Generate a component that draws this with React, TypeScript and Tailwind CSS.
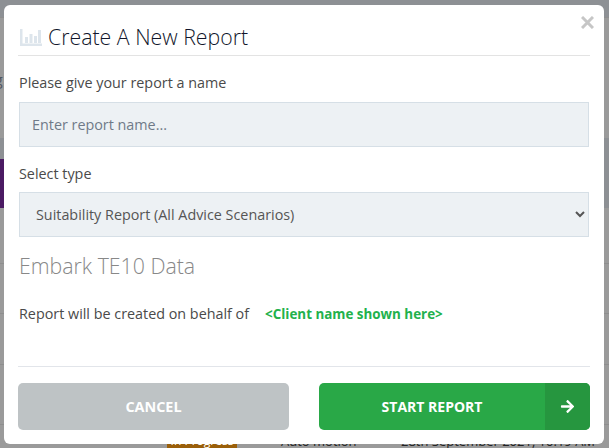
import React from "react";
import { FaArrowRight } from "react-icons/fa";

function ChartIcon() {
  return (
    <svg width="22" height="17" viewBox="0 0 22 17" className="shrink-0" fill="#dde5ec">
      <path d="M0 0h2.5v14.5H22V17H0z" />
      <rect x="5" y="8" width="3" height="6" />
      <rect x="9.5" y="5" width="3" height="9" />
      <rect x="14" y="7" width="3" height="7" />
      <rect x="18" y="1" width="3" height="13" />
    </svg>
  );
}

function BgRow({ h, className = "", children }: { h: string; className?: string; children?: React.ReactNode }) {
  return <div className={`${h} border-b border-[#8e8e8e] ${className}`}>{children}</div>;
}

export default function App() {
  return (
    <div className="relative h-[448px] w-[609px] overflow-hidden bg-[#9a9a9a] font-['Open_Sans',sans-serif]">
      {/* page behind the dialog */}
      <div className="flex h-[448px] flex-col">
        <div className="h-[17px] shrink-0 bg-[#8d9094]" />
        <div className="flex h-[121px] shrink-0 items-center border-t border-[#8e8e8e] pt-[2px]">
          <span className="ml-[-5px] text-[14px] text-[#4f5560]">g</span>
        </div>
        <div className="flex h-[70px] shrink-0 flex-col bg-[#8d9094]">
          <div className="h-[21px]" />
          <div className="h-[49px] w-[12px] bg-[#4b1a63]" />
        </div>
        <BgRow h="h-[56px] shrink-0" />
        <BgRow h="h-[50px] shrink-0" />
        <BgRow h="h-[51px] shrink-0" />
        <BgRow h="h-[60px] shrink-0" />
        <div className="flex h-[23px] shrink-0 items-end">
          <div className="mb-[-4px] flex h-[22px] w-full shrink-0 text-[13px] leading-[22px] text-[#222]">
            <span className="ml-[167px] w-[70px] bg-[#9a5f0a] text-center text-[12px] text-white">In Progress</span>
            <span className="ml-[44px] w-[120px]">Auto motion</span>
            <span className="whitespace-nowrap">28th September 2021, 10:19 AM</span>
          </div>
        </div>
      </div>

      {/* dialog */}
      <div className="absolute left-[4px] top-[5px] flex h-[439px] w-[600px] flex-col rounded-[6px] bg-white px-[14px]">
        <button className="absolute right-[10px] top-[11px] text-[#c6c6c6]" aria-label="Close">
          <svg width="13" height="13" viewBox="0 0 13 13" stroke="currentColor" strokeWidth="3">
            <path d="M1 1l11 11M12 1L1 12" />
          </svg>
        </button>

        <div className="flex h-[51px] shrink-0 items-end border-b border-[#e3e3e3] pb-[2px] pl-[2px]">
          <div className="flex items-center gap-[6px]">
            <ChartIcon />
            <h1 className="text-[21.3px] font-light leading-[32px] text-[#11162b]">Create A New Report</h1>
          </div>
        </div>

        <label className="mt-[17px] block pl-[1px] text-[14.35px] leading-[20px] text-[#4a4a4a]">
          Please give your report a name
        </label>
        <input
          placeholder="Enter report name..."
          className="ml-[1px] mt-[9px] h-[45px] w-[570px] shrink-0 border border-[#d6dfe6] bg-[#edf1f4] px-[12px] text-[14.35px] text-[#555] outline-none placeholder:text-[#6f7a88]"
        />

        <label className="mt-[17px] block pl-[1px] text-[14.35px] leading-[20px] text-[#4a4a4a]">Select type</label>
        <select
          defaultValue="a"
          className="ml-[1px] mt-[8px] h-[45px] w-[570px] shrink-0 border border-[#d6dfe6] bg-[#edf1f4] px-[12px] text-[14.35px] text-[#555] outline-none"
        >
          <option value="a">Suitability Report (All Advice Scenarios)</option>
        </select>

        <h2 className="mt-[15px] pl-[1px] text-[21.3px] font-light leading-[28px] text-[#888]">Embark TE10 Data</h2>

        <div className="mt-[24px] flex items-center pl-[1px] text-[14.35px] leading-[20px] text-[#4a4a4a]">
          <span>Report will be created on behalf of</span>
          <span className="ml-[16px] text-[13.4px] font-bold text-[#22b14c]">&lt;Client name shown here&gt;</span>
        </div>

        <div className="mt-[42px] h-px shrink-0 bg-[#e2e5ea]" />

        <div className="mt-[16px] flex justify-between">
          <button className="h-[47px] w-[271px] rounded-[5px] bg-[#bec3c5] text-[14.4px] font-bold text-white">
            CANCEL
          </button>
          <button className="flex h-[47px] w-[271px] overflow-hidden rounded-[5px] bg-[#29a847] text-[14px] font-bold text-white">
            <span className="flex h-full flex-1 items-center justify-center">START REPORT</span>
            <span className="flex h-full w-[45px] items-center justify-center bg-[#26963f]">
              <FaArrowRight className="text-[15px]" />
            </span>
          </button>
        </div>
      </div>
    </div>
  );
}
